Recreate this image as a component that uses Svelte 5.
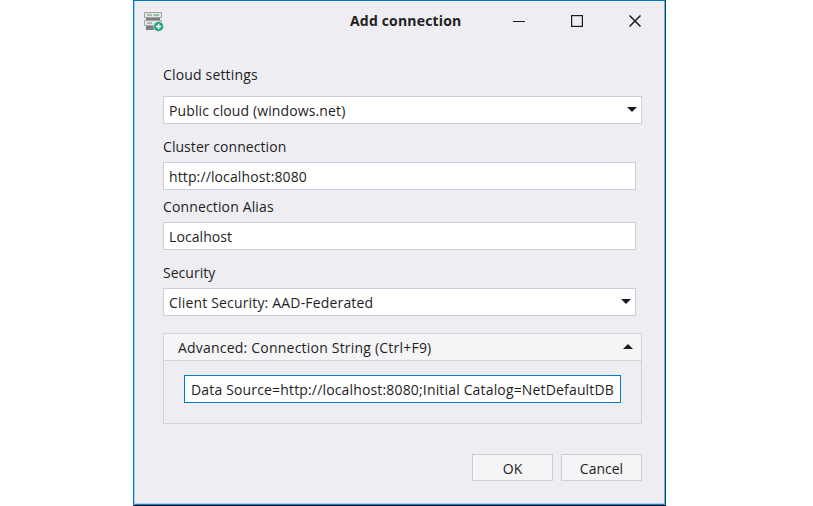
<script>
  let cloud = $state('Public cloud (windows.net)');
  let open = $state(true);
</script>

<main class="dialog">
  <header>
    <svg class="logo" width="22" height="22" viewBox="0 0 22 22">
      <rect x="1" y="2" width="18" height="6" rx=".7" fill="#a2a2a1" />
      <rect x="2" y="3" width="16" height="4" fill="#e6e6e4" />
      <path d="M4 5h5" stroke="#929292" stroke-width="1.2" />
      <path d="M10.5 5h5.5" stroke="#3eb58f" stroke-width="1.2" />
      <path d="M3 8h14v2H3z" fill="#7d7d7d" />
      <rect x="1" y="10" width="18" height="6" rx=".7" fill="#aaa" />
      <rect x="2" y="11" width="16" height="4" fill="#e6e6e4" />
      <path d="M4 13h5" stroke="#929292" stroke-width="1.2" />
      <path d="M3 16h9v4H3z" fill="#7d7d7d" />
      <circle cx="15.6" cy="16.5" r="5.2" fill="#edecf1" />
      <circle cx="15.6" cy="16.5" r="4.7" fill="#1fa37e" />
      <path d="M12.8 16.5h5.6M15.6 13.7v5.6" stroke="#fff" stroke-width="1.5" />
    </svg>
    <h1>Add connection</h1>
    <div class="controls">
      <svg width="12" height="12"><path d="M0 6.5h12" stroke="#1b1b1d" /></svg>
      <svg width="12" height="12"><rect x=".6" y=".6" width="10.8" height="10.8" fill="none" stroke="#1b1b1d" stroke-width="1.2" /></svg>
      <svg width="12" height="12"><path d="M.5.5l11 11M11.5.5l-11 11" stroke="#1b1b1d" stroke-width="1.5" /></svg>
    </div>
  </header>

  <section>
    <div class="label l1"><span>Cloud settings</span></div>
    <div class="field wide">
      <span class="t-cloud">{cloud}</span>
      <svg class="arrow" width="10" height="5"><path d="M0 0h10L5 5z" /></svg>
    </div>
    <div class="label l2"><span>Cluster connection</span></div>
    <div class="field"><span class="t-url">http://localhost:8080</span></div>
    <div class="label l3"><span>Connection Alias</span></div>
    <div class="field"><span class="t-alias">Localhost</span></div>
    <div class="label l4"><span>Security</span></div>
    <div class="field">
      <span class="t-sec">Client Security: AAD-Federated</span>
      <svg class="arrow" width="10" height="5"><path d="M0 0h10L5 5z" /></svg>
    </div>

    <div class="expander">
      <div class="bar">
        <span class="t-adv">Advanced: Connection String (Ctrl+F9)</span>
        <svg class="arrow" width="10" height="5"><path d="M0 5h10L5 0z" /></svg>
      </div>
      {#if open}
        <div class="field focus"><span class="t-data">Data Source=http://localhost:8080;Initial Catalog=NetDefaultDB</span></div>
      {/if}
    </div>

    <footer>
      <div class="button"><span>OK</span></div>
      <div class="button"><span>Cancel</span></div>
    </footer>
  </section>
</main>

<style>
  :global(body) { margin: 0; background: #fff; }
  .dialog {
    box-sizing: border-box; width: 533px; height: 506px; margin-left: 133px;
    background: #eeedf2; border: 1px solid #0077c8; border-right-color: #064a7c; border-bottom-color: #000;
    box-shadow: inset 1px 0 #9fd0ee, inset -1px 0 #68b2df, inset 0 -1px #0083d9, inset 0 -2px #a5d2ef;
    font: 14px/20px "Open Sans", "Noto Sans", sans-serif; color: #1e1e1e; white-space: nowrap;
  }
  header { display: flex; height: 40px; align-items: center; }
  .logo { margin-left: 9px; }
  h1 { margin: 0 0 0 185px; font-size: 14px; line-height: 20px; font-weight: 700; letter-spacing: .18px; width: 112px; }
  .controls { display: flex; gap: 46px; margin-left: 51px; }
  .controls svg { display: block; }
  section { padding-left: 29px; width: 479px; }
  .label { height: 20px; }
  .l1 { margin: 24px 0 11px; letter-spacing: .17px; }
  .l2 { margin: 13px 0 5px; letter-spacing: .06px; }
  .l3 { margin: 7px 0 5px; letter-spacing: .14px; }
  .l4 { margin: 13px 0 5px; letter-spacing: .03px; }
  .field {
    box-sizing: border-box; width: 473px; height: 28px; padding: 0 4px 0 5px; display: flex; align-items: center;
    justify-content: space-between; background: #fff; border: 1px solid #cccedb;
  }
  .field span, .bar span { padding-top: 2px; }
  .wide { width: 479px; }
  .t-cloud { letter-spacing: .12px; }
  .t-url { letter-spacing: .12px; }
  .t-alias { letter-spacing: .08px; }
  .t-sec { letter-spacing: .17px; }
  .t-adv { letter-spacing: .21px; }
  .t-data { letter-spacing: .16px; }
  .arrow { display: block; fill: #1b1b1d; flex: none; position: relative; top: -.5px; }
  .expander { box-sizing: border-box; width: 479px; height: 91px; margin-top: 17px; border: 1px solid #d2d2de; }
  .bar {
    box-sizing: border-box; height: 27px; padding: 0 8px 0 14px; display: flex; align-items: center;
    justify-content: space-between; background: #f5f5f7; border-bottom: 1px solid #d2d2de;
  }
  .focus { width: 437px; margin: 14px 0 0 20px; padding-left: 6px; border-color: #007acc; }
  footer { display: flex; justify-content: flex-end; gap: 8px; margin-top: 30px; }
  .button {
    box-sizing: border-box; width: 81px; height: 27px; display: flex; align-items: center; justify-content: center;
    background: #f5f5f7; border: 1px solid #cccedb; padding-top: 3px;
  }
</style>
